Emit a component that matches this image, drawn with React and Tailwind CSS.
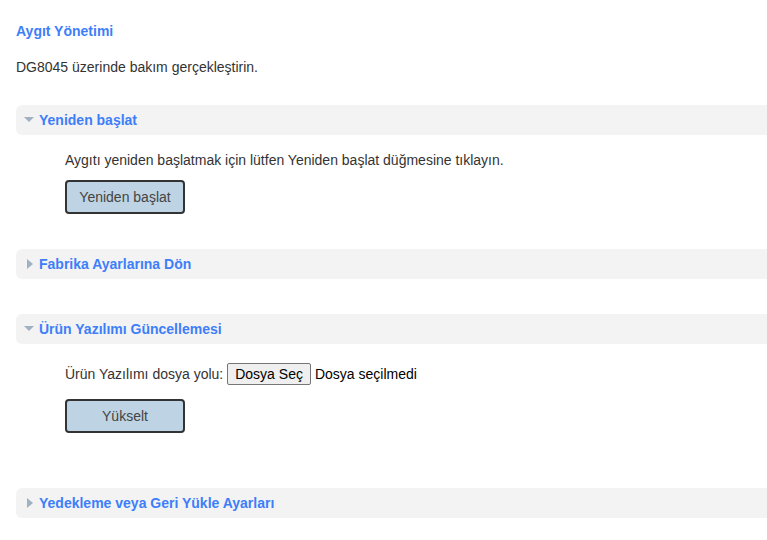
import React from "react";

const Down = () => (
  <svg width="10" height="6" viewBox="0 0 10 6" className="mr-[5px]">
    <path d="M0 0 L10 0 L5 5 Z" fill="#a0b2c2" />
  </svg>
);
const Right = () => (
  <svg width="6" height="10" viewBox="0 0 6 10" className="ml-[3px] mr-[6px]">
    <path d="M0 0 L6 5 L0 10 Z" fill="#a0b2c2" />
  </svg>
);

const Bar = ({ open, title }) => (
  <div className="flex items-center h-[30px] bg-[#f3f3f3] rounded-l-[6px] pl-[8px] ml-[16px] text-[14px] font-bold text-[#3d7ef9]">
    {open ? <Down /> : <Right />}
    <span>{title}</span>
  </div>
);

const Btn = ({ children }) => (
  <div className="w-[120px] h-[34px] flex items-center justify-center bg-[#bed3e3] border-2 border-[#333] rounded-[4px] text-[14px] text-[#444]">
    {children}
  </div>
);

export default function App() {
  return (
    <div className="w-[767px] h-[540px] bg-white overflow-hidden font-['Liberation_Sans',Arial,sans-serif] text-[#333]">
      <div className="pt-[23px] pl-[16px] text-[14px] font-bold text-[#3d7ef9] leading-[16px]">Aygıt Yönetimi</div>
      <div className="pt-[20px] pl-[16px] text-[14px] leading-[16px]">DG8045 üzerinde bakım gerçekleştirin.</div>
      <div className="mt-[30px]">
        <Bar open title="Yeniden başlat" />
      </div>
      <div className="pl-[65px] pt-[17px] text-[14px] leading-[16px]">
        Aygıtı yeniden başlatmak için lütfen Yeniden başlat düğmesine tıklayın.
      </div>
      <div className="pl-[65px] pt-[12px]">
        <Btn>Yeniden başlat</Btn>
      </div>
      <div className="mt-[35px]">
        <Bar title="Fabrika Ayarlarına Dön" />
      </div>
      <div className="mt-[35px]">
        <Bar open title="Ürün Yazılımı Güncellemesi" />
      </div>
      <div className="pl-[65px] pt-[19px] flex items-center text-[14px] leading-[16px]">
        <span>Ürün Yazılımı dosya yolu:</span>
        <span className="ml-[4px] h-[22px] px-[7px] flex items-center bg-[#efefef] border border-[#767676] rounded-[2px] text-black">Dosya Seç</span>
        <span className="ml-[4px] text-black">Dosya seçilmedi</span>
      </div>
      <div className="pl-[65px] pt-[14px]">
        <Btn>Yükselt</Btn>
      </div>
      <div className="mt-[55px]">
        <Bar title="Yedekleme veya Geri Yükle Ayarları" />
      </div>
    </div>
  );
}
